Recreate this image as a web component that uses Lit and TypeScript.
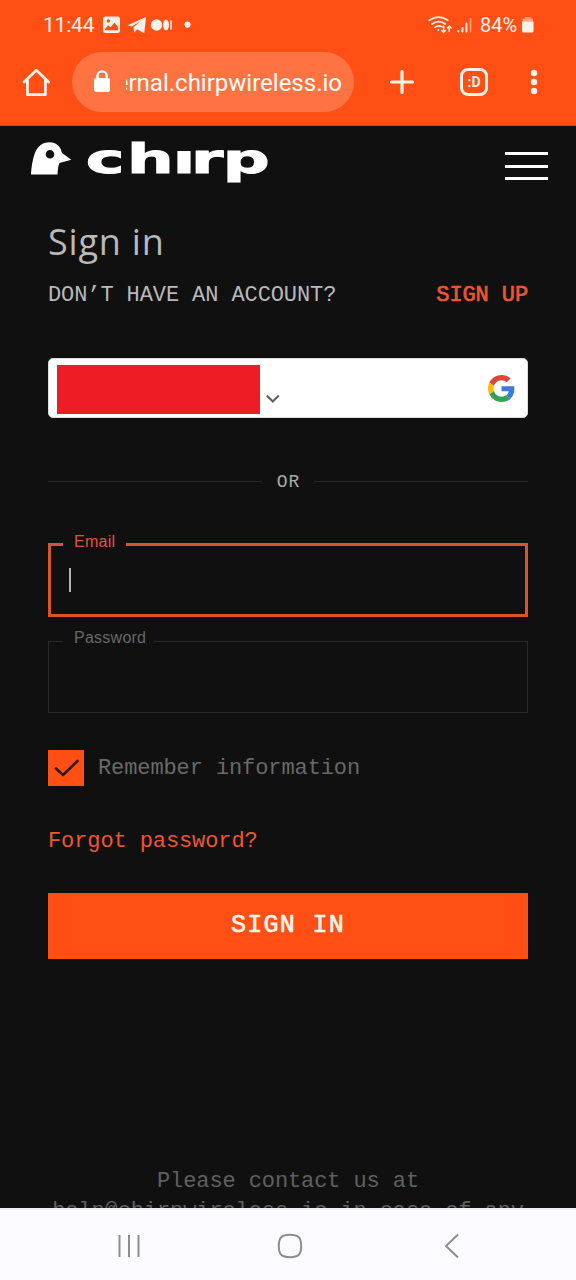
import { LitElement, html, css } from "lit";
import { customElement, property } from "lit/decorators.js";

@customElement("status-bar")
class StatusBar extends LitElement {
  static styles = css`
    :host { display: flex; height: 50px; padding: 0 42px 0 43px; box-sizing: border-box; align-items: center; justify-content: space-between; color: #fff1e8; font: 21px/24px Roboto, sans-serif; }
    .side { display: flex; align-items: center; }
    .time { width: 59px; letter-spacing: -0.2px; }
    .pct { font-size: 20px; margin-left: 7px; letter-spacing: 0; width: 41px; }
    svg { display: block; }
  `;
  render() {
    return html`
      <div class="side">
        <span class="time">11:44</span>
        <svg width="90" height="24" viewBox="102 13 90 24" fill="#fff1e8">
          <path fill-rule="evenodd" d="M105.5 16.5h12a2.5 2.5 0 0 1 2.5 2.5v11.500a2.500 2.500 0 0 1-2.500 2.500h-12a2.500 2.500 0 0 1-2.500-2.500V19a2.500 2.500 0 0 1 2.500-2.500zM105 30.200h13v-3.500l-3.500-4-4 4.500-2.300-2-3.200 3.800zM108.300 19.300a1.700 1.700 0 1 0 0 3.400 1.700 1.700 0 0 0 0-3.400z"/>
          <path d="M127.500 25.300 146 17l-1.800 16.600-7-4.300-3 3.200-.8-5.200 8-6.500-9.700 5.800z"/>
          <circle cx="156.500" cy="25" r="5.700"/><ellipse cx="166" cy="25" rx="3" ry="5.400"/><rect x="170.300" y="20" width="1.400" height="10" rx=".7"/>
          <circle cx="187.500" cy="24.600" r="3.100"/>
        </svg>
      </div>
      <div class="side">
        <svg width="46" height="24" viewBox="428 13 46 24" fill="none" stroke="#fff1e8" stroke-width="1.700" stroke-linecap="round">
          <path d="M430.300 20.300q9.200-6.500 18.400 0M433 24q6.600-4.800 13.200 0M436 27.300q3.600-2.800 7-.4"/>
          <circle cx="439.300" cy="30" r="1" fill="#fff1e8" stroke="none"/>
          <path stroke-width="1.500" d="M444.600 26v6M442.800 30.500l1.800 2 1.800-2M450.300 31.500v-5M448.500 28l1.800-2 1.800 2"/>
          <path stroke-width="1.800" d="M459.500 31v.5M463.500 28v3.500M467.500 23.500v8"/>
          <path stroke-width="1.800" opacity=".45" d="M471.500 19v12.500"/>
        </svg>
        <span class="pct">84%</span>
        <svg width="13" height="24" viewBox="521 13 13 24" fill="#fff1e8">
          <path opacity=".5" d="M525 17h5.500v1.500h2.500v4h-10.500v-4h2.500z"/><path d="M522 21.500h11.500v9.500a1.500 1.500 0 0 1-1.500 1.500h-8.500a1.500 1.500 0 0 1-1.500-1.500z"/>
        </svg>
      </div>`;
  }
}

@customElement("browser-bar")
class BrowserBar extends LitElement {
  static styles = css`
    :host { display: flex; height: 76px; padding: 2px 32px 0 22px; box-sizing: border-box; align-items: flex-start; border-bottom: 1px solid #b84a25; }
    svg { display: block; flex: none; }
    .home { margin: 15px 21px 0 0; }
    .pill { display: flex; width: 282px; height: 60px; border-radius: 30px; background: #ff7343; align-items: center; padding: 0 12px 0 20px; box-sizing: border-box; }
    .url { flex: none; width: 216px; margin-left: 14px; display: flex; justify-content: flex-end; overflow: hidden; font: 24px/34px Roboto, sans-serif; color: #fff; padding-top: 2px; white-space: nowrap; letter-spacing: 0; }
    .plus { margin: 17px 0 0 35px; }
    .tabs { margin: 16px 0 0 45px; box-sizing: border-box; width: 28px; height: 28px; border: 3px solid #fff1e8; border-radius: 8px; color: #fff1e8; font: bold 14px/22px Roboto, sans-serif; text-align: center; }
    .dots { margin: 15px 0 0 42px; }
  `;
  render() {
    return html`
      <svg class="home" width="29" height="30" viewBox="22 67 29 30" fill="none" stroke="#fff1e8" stroke-width="2.800" stroke-linejoin="round" stroke-linecap="round"><path d="M24 82 36.300 70.200 48.600 82M27.400 80v14.700h18V80"/></svg>
      <div class="pill">
        <svg width="20" height="24" viewBox="92 70 20 24"><path d="M97.500 79v-3a4.600 4.600 0 0 1 9.200 0v3" fill="none" stroke="#fff" stroke-width="2.400"/><rect x="94" y="78" width="16" height="14" rx="2" fill="#fff"/></svg>
        <div class="url"><span>ernal.chirpwireless.io</span></div>
      </div>
      <svg class="plus" width="26" height="26" viewBox="0 0 26 26" stroke="#fff1e8" stroke-width="3.200" stroke-linecap="round"><path d="M2.500 13h21M13 2.500v21"/></svg>
      <div class="tabs">:D</div>
      <svg class="dots" width="12" height="30" viewBox="0 0 12 30" fill="#fff1e8"><circle cx="4" cy="6" r="3.200"/><circle cx="4" cy="15" r="3.200"/><circle cx="4" cy="24" r="3.200"/></svg>`;
  }
}

@customElement("outlined-field")
class OutlinedField extends LitElement {
  @property() label = "";
  @property({ type: Boolean, reflect: true }) active = false;
  static styles = css`
    :host { display: block; }
    fieldset { margin: 0; padding: 0; box-sizing: border-box; height: 81px; border: 1px solid #292929; color: #686868; min-width: 0; }
    legend { margin-left: 14px; padding: 0 8px 7px 11px; font: 16px/11px "Liberation Sans", sans-serif; letter-spacing: 0.25px; height: 11px; }
    :host([active]) fieldset { border: 3px solid #d9532c; color: #e0533a; height: 82px; }
    :host([active]) legend { margin-left: 12px; padding: 0 11px 4px; line-height: 14px; height: 14px; }
    .caret { width: 2px; height: 24px; margin: 15px 0 0 17.500px; background: #b4b4b4; }
  `;
  render() {
    return html`<fieldset><legend>${this.label}</legend>${this.active ? html`<div class="caret"></div>` : ""}</fieldset>`;
  }
}

@customElement("app-root")
class AppRoot extends LitElement {
  static styles = css`
    :host { display: flex; flex-direction: column; width: 576px; height: 1280px; overflow: hidden; background: #101010; }
    .chrome { background: #ff4f15; flex: none; height: 126px; }
    .page { flex: 1; min-height: 0; overflow: hidden; font: 22px/30px "Liberation Mono", monospace; letter-spacing: -0.1px; }
    svg { display: block; flex: none; }
    .top { display: flex; justify-content: space-between; height: 80px; padding: 2px 28px 0 30px; box-sizing: border-box; }
    .word { font: bold 41px "DejaVu Sans", sans-serif; }
    .burger { display: flex; flex-direction: column; gap: 9.500px; padding-top: 24px; }
    .burger i { width: 43px; height: 3px; background: #fff; }
    main { padding: 0 48px; }
    h1 { margin: 11px 0 0; font: 400 36px/50px "Open Sans", sans-serif; color: #b9b9b9; letter-spacing: 0.8px; height: 50px; }
    .account { display: flex; justify-content: space-between; margin-top: 14px; color: #b9b9b9; white-space: nowrap; }
    .accent { color: #ee5530; }
    .medium { -webkit-text-stroke: 0.700px currentColor; }
    .google { display: flex; margin-top: 47px; height: 60px; box-sizing: border-box; border: 1px solid #dadce0; border-radius: 5px; background: #fff; padding: 6px 12px 3px 8px; }
    .redacted { width: 203px; height: 49px; background: #ee1c25; }
    .chev { margin: 28px auto 0 5px; }
    .g { margin-top: 10px; }
    .or { display: flex; align-items: center; gap: 15px; margin-top: 48px; color: #a9a9a9; font-size: 18px; letter-spacing: 1px; height: 30px; }
    .or::before, .or::after { content: ""; flex: 1; height: 1px; background: #282828; }
    .or span { margin-right: -1px; padding-top: 1px; }
    .email { margin-top: 39px; }
    .password { margin-top: 15px; }
    .remember { display: flex; align-items: center; gap: 14px; margin-top: 37px; height: 36px; color: #696969; }
    .check { width: 36px; height: 36px; background: #ff4f15; }
    .label { padding-top: 1px; }
    .forgot { margin-top: 41px; }
    .btn { display: flex; margin-top: 36px; height: 66px; box-sizing: border-box; background: #ff4f15; align-items: center; justify-content: center; color: #fff4e8; font-size: 25px; letter-spacing: 1.300px; }
    .help { margin-top: 208px; color: #606060; text-align: center; line-height: 30px; white-space: nowrap; }
    nav { flex: none; height: 72px; box-sizing: border-box; border-top: 2px solid #f0edf4; background: #fcfbff; display: flex; align-items: flex-start; justify-content: space-between; padding: 22px 109px 0 115px; }
  `;
  render() {
    return html`
      <div class="chrome"><status-bar></status-bar><browser-bar></browser-bar></div>
      <div class="page">
        <div class="top">
          <svg width="252" height="70" viewBox="30 128 252 70" fill="#fff" role="img" aria-label="chirp">
            <clipPath id="stems"><path d="M80 128h93.500v23h19v-23h90v70H80z"/></clipPath>
            <path fill-rule="evenodd" d="M31 174.500C32.500 158 35 142.300 49.500 142.300c7 0 11.200 4.200 12.500 10.700L71.300 159.700 59.500 163c-1.400 2.500-1.700 7-2 11.500zM50 150a4.300 4.300 0 1 0 0 8.600 4.300 4.300 0 0 0 0-8.600z"/>
            <g clip-path="url(#stems)"><text class="word" transform="scale(1.6 1)" x="53.600 79.400 108 119.400 139.300" y="173.500" stroke="#fff" stroke-width="1">chirp</text></g>
          </svg>
          <div class="burger"><i></i><i></i><i></i></div>
        </div>
        <main>
          <h1>Sign in</h1>
          <div class="account"><span>DON’T HAVE AN ACCOUNT?</span><span class="accent medium">SIGN UP</span></div>
          <div class="google">
            <div class="redacted"></div>
            <svg class="chev" width="16" height="12" viewBox="0 0 16 12" fill="none" stroke="#5f6368" stroke-width="2.200"><path d="m1.800 2.500 6 6 6-6"/></svg>
            <svg class="g" width="27" height="27" viewBox="0 0 48 48">
              <path fill="#E0453A" d="M24 9.500c3.540 0 6.710 1.220 9.210 3.600l6.850-6.850C35.900 2.380 30.470 0 24 0 14.620 0 6.510 5.380 2.560 13.220l7.980 6.190C12.430 13.720 17.740 9.500 24 9.500z"/>
              <path fill="#4279DC" d="M46.980 24.550c0-1.570-.15-3.090-.38-4.550H24v9.020h12.940c-.58 2.960-2.260 5.480-4.780 7.180l7.730 6c4.510-4.180 7.090-10.360 7.090-17.650z"/>
              <path fill="#FBBC05" d="M10.530 28.590c-.48-1.450-.76-2.990-.76-4.590s.27-3.140.76-4.590l-7.980-6.190C.92 16.460 0 20.120 0 24c0 3.880.92 7.540 2.560 10.780l7.970-6.190z"/>
              <path fill="#36A055" d="M24 48c6.480 0 11.930-2.130 15.890-5.810l-7.730-6c-2.150 1.450-4.920 2.300-8.160 2.300-6.260 0-11.570-4.220-13.470-9.910l-7.980 6.190C6.510 42.620 14.620 48 24 48z"/>
            </svg>
          </div>
          <div class="or"><span>OR</span></div>
          <outlined-field class="email" label="Email" active></outlined-field>
          <outlined-field class="password" label="Password"></outlined-field>
          <div class="remember">
            <svg class="check" viewBox="0 0 36 36" fill="none" stroke="#32150c" stroke-width="2.600" stroke-linecap="round" stroke-linejoin="round"><path d="m8 18.500 7 6.500L29.500 11"/></svg>
            <span class="label">Remember information</span>
          </div>
          <div class="forgot accent">Forgot password?</div>
          <div class="btn medium">SIGN IN</div>
          <div class="help">Please contact us at<br>help@chirpwireless.io in case of any</div>
        </main>
      </div>
      <nav>
        <svg width="28" height="28" viewBox="0 0 28 28" stroke="#8d8d8f" stroke-width="2"><path d="M4.500 3v22M14 3v22M23.500 3v22"/></svg>
        <svg width="28" height="28" viewBox="0 0 28 28" fill="none" stroke="#8d8d8f" stroke-width="2"><path d="M13 2.800c8.500 0 11.200 2.700 11.200 11.200S21.500 25.200 13 25.200 1.800 22.500 1.800 14 4.500 2.800 13 2.800z"/></svg>
        <svg width="28" height="28" viewBox="0 0 28 28" fill="none" stroke="#8d8d8f" stroke-width="2"><path d="M19 2.500 7 14l12 11.500"/></svg>
      </nav>`;
  }
}
